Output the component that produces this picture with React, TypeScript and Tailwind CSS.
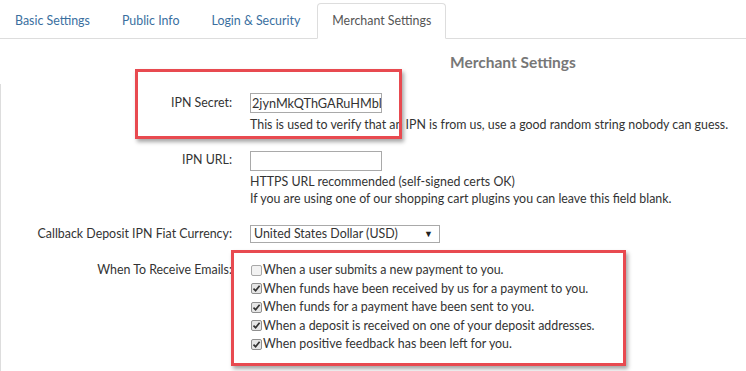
import React from "react";

const tabs = ["Basic Settings", "Public Info", "Login & Security", "Merchant Settings"];

function Check({ checked }: { checked: boolean }) {
  return (
    <span
      className={
        "inline-flex items-center justify-center w-[11px] h-[11px] mr-[1px] border rounded-[2px] shrink-0 " +
        (checked ? "border-[#8f8f8f] bg-[#e6e6e6]" : "border-[#a8a8a8] bg-[#f2f2f2]")
      }
    >
      {checked && (
        <svg width="9" height="9" viewBox="0 0 9 9">
          <path d="M1.5 4.6 L3.6 6.7 L7.6 1.8" stroke="#333" strokeWidth="1.7" fill="none" />
        </svg>
      )}
    </span>
  );
}

const emails: [boolean, string][] = [
  [false, "When a user submits a new payment to you."],
  [true, "When funds have been received by us for a payment to you."],
  [true, "When funds for a payment have been sent to you."],
  [true, "When a deposit is received on one of your deposit addresses."],
  [true, "When positive feedback has been left for you."],
];

export default function App() {
  return (
    <div
      className="relative flex flex-col w-[746px] h-[371px] overflow-hidden bg-white text-[12.4px] text-[#333]"
      style={{ fontFamily: "Lato, 'Open Sans', sans-serif" }}
    >
      {/* Tabs */}
      <div className="flex pt-[3px] border-b border-[#ddd] pl-0">
        {tabs.map((t, i) => {
          const active = i === tabs.length - 1;
          return (
            <div
              key={t}
              className={
                "h-[36px] mb-[-1px] flex items-center px-[14px] mr-[2px] rounded-t-[4px] border text-[12.4px] " +
                (active
                  ? "border-[#ddd] border-b-white bg-white text-[#555]"
                  : "border-transparent text-[#3a6f9f]")
              }
            >
              {t}
            </div>
          );
        })}
      </div>

      {/* Heading */}
      <div className="pl-[450px] pt-[13px] h-[45px] text-[15.5px] font-bold text-[#777] leading-[20px]">
        Merchant Settings
      </div>

      {/* Form */}
      <div className="flex-1 border-l border-[#ddd] pt-[9px]">
        {/* IPN Secret */}
        <div className="grid grid-cols-[231px_1fr] gap-x-[18px]">
          <div className="text-right h-[20px] leading-[19px]">IPN Secret:</div>
          <div>
            <div className="w-[132px] h-[20px] border border-[#a9a9a9] pl-[1px] leading-[18px] text-[12.7px] overflow-hidden whitespace-nowrap">
              2jynMkQThGARuHMbl
            </div>
            <div className="leading-[17px] mt-[3px] whitespace-nowrap">
              This is used to verify that an IPN is from us, use a good random string nobody can guess.
            </div>
          </div>
        </div>

        {/* IPN URL */}
        <div className="grid grid-cols-[231px_1fr] gap-x-[18px] mt-[18px]">
          <div className="text-right h-[20px] leading-[18px]">IPN URL:</div>
          <div>
            <div className="w-[132px] h-[20px] border border-[#a9a9a9]" />
            <div className="leading-[17px] mt-[2px] whitespace-nowrap">HTTPS URL recommended (self-signed certs OK)</div>
            <div className="leading-[17px] whitespace-nowrap">
              If you are using one of our shopping cart plugins you can leave this field blank.
            </div>
          </div>
        </div>

        {/* Callback */}
        <div className="grid grid-cols-[231px_1fr] gap-x-[18px] mt-[18px]">
          <div className="text-right h-[18px] leading-[18px] whitespace-nowrap">Callback Deposit IPN Fiat Currency:</div>
          <div>
            <div className="w-[190px] h-[18px] border border-[#a9a9a9] flex items-center justify-between pl-[3px] pr-[6px] leading-[16px]">
              <span>United States Dollar (USD)</span>
              <span className="text-[9px] text-[#222]">▼</span>
            </div>
          </div>
        </div>

        {/* Emails */}
        <div className="grid grid-cols-[231px_1fr] gap-x-[18px] mt-[18px]">
          <div className="text-right leading-[18.5px]">When To Receive Emails:</div>
          <div>
            {emails.map(([c, t]) => (
              <div key={t} className="flex items-center leading-[18.5px] h-[18.5px] pl-[1px] whitespace-nowrap">
                <Check checked={c} />
                <span>{t}</span>
              </div>
            ))}
          </div>
        </div>
      </div>

      {/* Highlight boxes */}
      <div className="absolute left-[135px] top-[69px] w-[267px] h-[70px] border-[3px] border-[#e84a50] shadow-[2px_3px_4px_rgba(0,0,0,0.35)]" />
      <div className="absolute left-[231px] top-[250px] w-[395px] h-[116px] border-[3px] border-[#e84a50] shadow-[2px_3px_4px_rgba(0,0,0,0.35)]" />
    </div>
  );
}
